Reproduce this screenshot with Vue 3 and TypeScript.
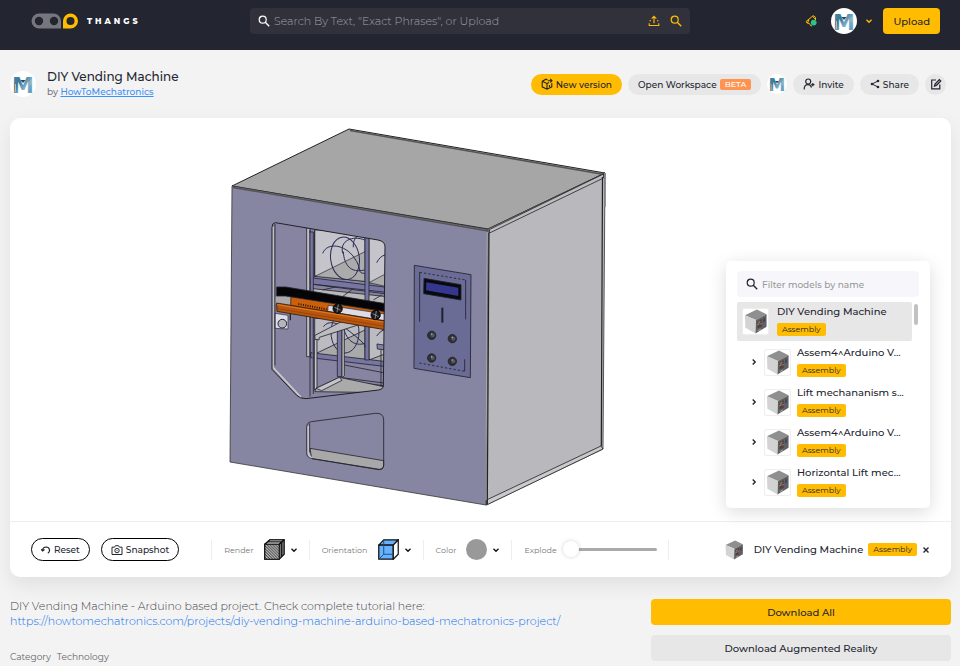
<script setup lang="ts">
import { ref } from 'vue'

interface ModelNode {
  name: string
  kind: string
}

const root: ModelNode = { name: 'DIY Vending Machine', kind: 'Assembly' }
const children: ModelNode[] = [
  { name: 'Assem4^Arduino V...', kind: 'Assembly' },
  { name: 'Lift mechananism s...', kind: 'Assembly' },
  { name: 'Assem4^Arduino V...', kind: 'Assembly' },
  { name: 'Horizontal Lift mec...', kind: 'Assembly' },
]

const buttons = [
  { x: 95, y: 646 },
  { x: 157, y: 656 },
  { x: 95, y: 714 },
  { x: 157, y: 724 },
]

const query = ref('')
const filter = ref('')
const explode = ref(0)
</script>

<template>
  <svg class="sprite" aria-hidden="true">
    <defs>
      <linearGradient id="mBlue" x1="0" y1="0" x2="1" y2="1">
        <stop offset="0" stop-color="#4a93b5" />
        <stop offset="0.35" stop-color="#3b7796" />
        <stop offset="0.6" stop-color="#7fb2cf" />
        <stop offset="1" stop-color="#4889b4" />
      </linearGradient>
      <pattern id="hatch" width="3" height="3" patternUnits="userSpaceOnUse">
        <rect width="3" height="3" fill="#fff" />
        <path d="M-1 -1l5 5M-1 2l2 2M2 -1l2 2" stroke="#111" stroke-width="1.1" />
      </pattern>
      <symbol id="avatar" viewBox="0 0 26 26">
        <circle cx="13" cy="13" r="13" fill="#fff" />
        <text x="13" y="21.500" text-anchor="middle" class="avatar-letter">M</text>
        <path d="M5.500 13v8M21 9v5" stroke="#c9b98e" stroke-width="1" />
        <path d="M10.500 9l2.500 3 2.500-3z" fill="#27475d" />
      </symbol>
      <symbol id="thumb" viewBox="0 0 26 26">
        <path d="M2 6.500L14.500 0.500 24.500 5.500 13.500 11.500z" fill="#8f8f8f" />
        <path d="M2 6.500L13.500 11.500 13 25.500 2.500 19.500z" fill="#d3d3d3" />
        <path d="M13.500 11.500L24.500 5.500V18.500L13 25.500z" fill="#616163" />
        <path d="M15 13l4.500-2.500v8L15 20z" fill="#4a4243" />
        <path d="M15 15.500l2-1v1.700l-2 1zM18 15l1.500-.8v1.500l-1.500.8z" fill="#c17b4b" />
        <path d="M16 13.500l2-1v1l-2 1zM15.500 22l3-1.800v1.200l-3 1.800z" fill="#aaa" />
        <path d="M21 10l2-1v4l-2 1z" fill="#3e4468" />
      </symbol>
      <symbol id="search" viewBox="0 0 12 12">
        <circle cx="4.700" cy="4.700" r="3.500" fill="none" stroke="currentColor" stroke-width="1.200" />
        <path d="M7.300 7.300L11.200 11.200" stroke="currentColor" stroke-width="1.400" />
      </symbol>
      <symbol id="chevron" viewBox="0 0 8 8">
        <path d="M1.500 2.700L4 5.200 6.500 2.700" fill="none" stroke="currentColor" stroke-width="1.400" />
      </symbol>
    </defs>
  </svg>

  <header class="topbar">
    <a class="brand" href="#" aria-label="Thangs home">
      <svg class="brand-mark" viewBox="0 0 48 16">
        <path d="M8 .5H22.500a7.500 7.500 0 0 1 7.500 7.500V15.500H8A7.500 7.500 0 0 1 8 .5z" fill="#76767e" />
        <circle cx="8" cy="8" r="4.200" fill="#232530" />
        <circle cx="23" cy="8" r="4.200" fill="#232530" />
        <path d="M32 15.500V8A7.500 7.500 0 1 1 39.500 15.500z" fill="#ffbc00" />
        <circle cx="39.500" cy="8" r="4" fill="#232530" />
      </svg>
      <span class="brand-name">THANGS</span>
    </a>
    <form class="search" @submit.prevent>
      <svg class="i12"><use href="#search" /></svg>
      <input v-model="query" type="text" aria-label="Search" placeholder="Search By Text, &quot;Exact Phrases&quot;, or Upload" />
      <button type="button" class="plain gold" aria-label="Upload file to search">
        <svg class="i12" viewBox="0 0 12 12" fill="none" stroke="currentColor" stroke-width="1.100">
          <path d="M6 8.200V1.500M3.700 3.600L6 1.300 8.300 3.600M3 5.800H1.500M9 5.800h1.500M1.200 8.200v2.300h9.600V8.200" />
        </svg>
      </button>
      <button type="submit" class="plain gold" aria-label="Search"><svg class="i12"><use href="#search" /></svg></button>
    </form>
    <div class="account">
      <button type="button" class="plain gold" aria-label="Notifications">
        <svg class="i12" viewBox="0 0 12 12">
          <path d="M7.500 1.200L1.200 6.300 2 8 4.500 8.500 5.500 10.500 7 11M7.500 1.200L10.500 4.500M7.500 1.200L9 .8 10.500 2.500V5M4 4.500L2.500 8" fill="none" stroke="currentColor" stroke-width="1" />
          <circle cx="8.700" cy="7.600" r="2.900" fill="#2bc48a" />
        </svg>
      </button>
      <button type="button" class="plain gold user" aria-label="Account menu">
        <svg class="i26"><use href="#avatar" /></svg>
        <svg class="i8"><use href="#chevron" /></svg>
      </button>
      <button type="button" class="upload">Upload</button>
    </div>
  </header>

  <main class="page">
    <section class="heading">
      <svg class="i26"><use href="#avatar" /></svg>
      <div class="titles">
        <h1>DIY Vending Machine</h1>
        <p>by <a href="#">HowToMechatronics</a></p>
      </div>
      <div class="actions">
        <button type="button" class="pill primary">
          <svg class="i12" viewBox="0 0 12 12" fill="none" stroke="currentColor" stroke-width="1.100">
            <path d="M1.200 3.200L5 1.200 6.500 2M1.200 3.200V8.800L6 11.200 10.800 8.800V5M1.200 3.200L6 5.500V11M6 5.500L8 4.500M7 2.700H11M9.300 1L11 2.700 9.300 4.400M8.500 7v2" />
          </svg>
          New version
        </button>
        <button type="button" class="pill">Open Workspace <span class="beta">BETA</span></button>
        <svg class="i20"><use href="#avatar" /></svg>
        <button type="button" class="pill">
          <svg class="i12" viewBox="0 0 12 12" fill="none" stroke="currentColor" stroke-width="1.200">
            <circle cx="5.200" cy="3.500" r="2.500" />
            <path d="M1.200 11.500C1.200 8 2.600 6.600 5 6.600c1.800 0 3 .9 3.500 2.900M9.800 5v3.200M8.200 6.600h3.200" />
          </svg>
          Invite
        </button>
        <button type="button" class="pill">
          <svg class="i10" viewBox="0 0 10 10">
            <path d="M8 2L2 5l6 3" fill="none" stroke="currentColor" />
            <circle cx="8" cy="2" r="1.300" fill="currentColor" /><circle cx="2" cy="5" r="1.300" fill="currentColor" /><circle cx="8" cy="8" r="1.300" fill="currentColor" />
          </svg>
          Share
        </button>
        <button type="button" class="pill round" aria-label="Edit">
          <svg class="i12" viewBox="0 0 12 12" fill="none" stroke="currentColor" stroke-width="1.200">
            <path d="M6 2H1.700V10.800H9.800V6.500" />
            <path d="M4.500 8L5 6 9.300 1.500 10.800 3 6.400 7.400z" fill="currentColor" fill-opacity=".25" />
          </svg>
        </button>
      </div>
    </section>

    <section class="viewer">
      <div class="stage">
        <svg class="model" viewBox="10 118 941 403" role="img" aria-label="Vending machine 3D model" stroke-linejoin="round">
          <path d="M232 186L349 129 605 173 488 229z" fill="#a6a6a6" stroke="#222" />
          <path d="M488 229L605 173 603 449 486 505z" fill="#b9b8bd" stroke="#333" stroke-width=".8" />
          <path d="M232 186L488 229.500 486 505 230 462z" fill="#8786a2" stroke="#333" stroke-width=".8" />
          <path d="M233 187.500L488 231M350 130.500L604 174.500" fill="none" stroke="#555" stroke-width="1.500" />
          <path d="M489.500 229.500L603.500 174V178L489.500 233z" fill="#bdbcc1" stroke="#222" stroke-width=".8" />
          <path d="M487.500 499.500L601 446 603 449 486.500 505z" fill="#cac9cd" stroke="#333" stroke-width=".9" />
          <path d="M602.500 177L601.300 446M489 233L487.300 504" fill="none" stroke="#222" stroke-width="1.200" />
          <path d="M605 173V207" stroke="#85858a" stroke-width="1.600" />
          <path d="M487.300 232L486 500" stroke="#bebdc6" stroke-width=".8" />

          <!-- Dispenser window -->
          <clipPath id="windowClip">
            <path d="M46 38L354 90Q375 94 375 110L370 530Q368 538 356 540L138 566Q120 566 110 556L36 478V52Q36 39 46 38z" />
          </clipPath>
          <g transform="translate(260 210) scale(.33333)">
            <g clip-path="url(#windowClip)" stroke="#252530" stroke-width="2.500" fill="none">
              <path d="M30 30H380V570H30z" fill="#8684a0" />
              <path d="M164 60H315V214L164 198zM327 85H380V225L327 218z" fill="#c5c4ca" />
              <path d="M165 199L315 125V214zM327 218L380 190V230z" fill="#ababab" stroke-width="2" />
              <path d="M150 235L380 260V300L150 280z" fill="#b9b9ba" />
              <path d="M188 240L230 230M240 265L275 240M340 270L365 255" />
              <path d="M164 325H315V450L164 432zM327 350H380V460L327 450z" fill="#bcbbc2" />
              <path d="M165 432L315 360V450zM327 450L380 430V460z" fill="#a9a9a9" />
              <path d="M152 203L380 232V252L152 222z" fill="#7776a3" />
              <path d="M152 222L380 247" />
              <path d="M152 428L380 455V470L152 443z" fill="#7776a3" />
              <path d="M315 76H327V450H315z" fill="#7776a3" />
              <g stroke="#2b2c55" stroke-width="3">
                <ellipse cx="255" cy="145" rx="43" ry="64" transform="rotate(-8 255 145)" />
                <path d="M188 130C202 95 255 104 282 142S290 190 314 190M248 130C238 92 278 75 314 90M250 125C252 166 273 190 313 180M280 112C278 90 290 76 302 74M350 158Q361 137 376 135" />
                <ellipse cx="255" cy="367" rx="42" ry="62" />
                <path d="M190 350Q213 320 270 365T313 412M249 342C255 392 285 410 315 400M350 378Q360 363 374 358" />
              </g>
              <path d="M140 54H150V440H140z" fill="#c0bfc5" />
              <path d="M150 60V560M164 62V202M148 66H160V552" fill="#7776a3" />
              <!-- Lower tray frame -->
              <path d="M232 350H246V500H232z" fill="#7978a3" />
              <path d="M246 350L253 344V497L246 503z" fill="#bbb" />
              <path d="M163 390L171 385V535L163 540z" fill="#c4c3c8" />
              <path d="M165 376L250 332 310 340 178 382 177 390 164 387z" fill="#bdbcc1" />
              <path d="M253 465L380 490M246 503L380 520M246 512L380 528" />
              <path d="M168 535L238 502 372 530V548L165 545z" fill="#aaa" />
              <path d="M168 535L238 502 246 511 185 542z" fill="#c5c4c8" />
              <path d="M351 402L378 406V420L352 417zM363 420V530" fill="#8382a4" />
              <!-- Carriage and rails -->
              <path d="M45 260L100 250V285L45 283z" fill="#aaa9ad" stroke="none" />
              <path d="M93 258L375 300V337L92 287z" fill="#cb5f0a" stroke="#492714" />
              <path d="M50 231H78L376 281V305L76 258H50z" fill="#050507" />
              <path d="M205 286L375 312V332L202 304z" fill="#dddce9" stroke-width="2" />
              <path d="M50 279L374 333V359L51 304z" fill="#b9560b" stroke="#30190e" />
              <path d="M52 284L374 337" stroke="#df7d28" stroke-width="3" />
              <path d="M52 296L374 349" stroke="#83400e" stroke-width="2" />
              <path d="M115 282L205 299" stroke="#2a1508" stroke-width="6" stroke-dasharray="3 4" />
              <g fill="#18191c" stroke="#000">
                <circle cx="233" cy="296" r="14" /><circle cx="347" cy="315" r="14" />
              </g>
              <path d="M224 292l18 9M235 283l-4 24M338 311l18 9M349 303l-4 24" stroke="#b6b6bb" stroke-width="2" />
              <path d="M45 310L84 316V357L45 355z" fill="#dddce9" stroke-width="2" />
              <circle cx="67" cy="341" r="13" fill="#b6b5bd" stroke-width="3" />
              <path d="M91 311v20" stroke-width="4" />
              <path d="M39 50V472L123 562" stroke="#c9c9c9" stroke-width="5" />
              <path d="M45 42V466" />
            </g>
            <path d="M46 38L354 90Q375 94 375 110L370 530Q368 538 356 540L138 566Q120 566 110 556L36 478V52Q36 39 46 38z" fill="none" stroke="#20202a" stroke-width="3" />
          </g>

          <!-- Control panel -->
          <g transform="translate(400 120) scale(.33333)" fill="none" stroke="#20212d" stroke-width="2.500">
            <path d="M43 436L213 464 211 773 42 745z" fill="#6b6c96" />
            <path d="M59 457L197 480M58 729L194 754" stroke-dasharray="7 6" />
            <path d="M59 457V605M197 480V598M194 718V754" />
            <path d="M72 475L183 494V540L71 521z" fill="#090a0e" />
            <path d="M79 487L175 503V528L78 511z" fill="#35378f" stroke="none" />
            <path d="M127 563V608" stroke-width="6" />
            <g v-for="b in buttons" :key="`${b.x}-${b.y}`">
              <circle :cx="b.x" :cy="b.y" r="12.500" fill="#303136" />
              <circle :cx="b.x + 3" :cy="b.y" r="6" fill="#57585b" stroke="none" />
              <circle :cx="b.x" :cy="b.y - 4" r="2.500" fill="#aaa" stroke="none" />
            </g>
          </g>

          <!-- Collection slot -->
          <g transform="translate(220 380) scale(.33333)" fill="none" stroke="#24242f" stroke-width="2.500">
            <path d="M270 205L491 242V258Q490 268 478 268L275 236z" fill="#a8a8a9" />
            <path d="M265 137V220Q266 230 276 235" stroke="#c5c5c9" stroke-width="7" />
            <path d="M274 125L466 100Q491 98 491 120V254Q491 270 476 269L277 236Q260 234 260 218V142Q260 127 274 125zM269 130V217" />
          </g>
        </svg>

        <aside class="tree">
          <label class="filter">
            <svg class="i12"><use href="#search" /></svg>
            <input v-model="filter" type="text" aria-label="Filter models by name" placeholder="Filter models by name" />
          </label>
          <div class="tree-body">
            <ul>
              <li class="node selected">
                <span class="thumb"><svg><use href="#thumb" /></svg></span>
                <span class="node-text"><span class="node-name">{{ root.name }}</span><span class="badge">{{ root.kind }}</span></span>
              </li>
              <li v-for="(node, i) in children" :key="i" class="node child">
                <button type="button" class="plain" :aria-label="`Expand ${node.name}`">
                  <svg class="i8 turn"><use href="#chevron" /></svg>
                </button>
                <span class="thumb"><svg><use href="#thumb" /></svg></span>
                <span class="node-text"><span class="node-name">{{ node.name }}</span><span class="badge">{{ node.kind }}</span></span>
              </li>
            </ul>
            <span class="scroll"></span>
          </div>
        </aside>
      </div>

      <div class="toolbar">
        <div class="views">
          <button type="button" class="outline">
            <svg class="i10" viewBox="0 0 10 10" fill="none" stroke="currentColor" stroke-width="1.200">
              <path d="M1.500 5.500C1.700 3.300 3.300 2 5.300 2a3.300 3.300 0 0 1 1.500 6.200M0 4.200l1.600 1.800L3.500 4.500" />
            </svg>
            Reset
          </button>
          <button type="button" class="outline">
            <svg class="i12" viewBox="0 0 12 12" fill="none" stroke="currentColor">
              <path d="M1 3.200h2.500L4.500 1.700h3L8.500 3.200H11V10.500H1z" /><circle cx="6" cy="6.600" r="2.200" /><path d="M5.500 6.600h1" />
            </svg>
            Snapshot
          </button>
        </div>
        <div class="tool">
          <span>Render</span>
          <button type="button" class="plain drop" aria-label="Render mode">
            <svg class="i21" viewBox="0 0 22 22" stroke="#111" stroke-width="1.200">
              <path d="M.8 5.500L6 .8H21.200V16L16 21.200H.8z" fill="#777" />
              <path d="M1 5.500L6 1H21L16 5.500z" fill="#eee" />
              <path d="M4 3H18.500V18.500M16 5.500L21 1" fill="none" />
              <path d="M.8 5.500H16V21.200H.8z" fill="url(#hatch)" />
            </svg>
            <svg class="i8"><use href="#chevron" /></svg>
          </button>
        </div>
        <div class="tool">
          <span>Orientation</span>
          <button type="button" class="plain drop" aria-label="Orientation">
            <svg class="i21" viewBox="0 0 22 22" fill="none" stroke="#111" stroke-width="1.300">
              <path d="M.8 6.500L6 .8H21.200L16 6.500z" fill="#66b2ff" />
              <path d="M.8 6.500H16V21.200H.8z" fill="#66b2ff" />
              <path d="M16 6.500L21.200 .8V16L16 21.200z" fill="#fff" />
              <path d="M6 1V16H15.500M6 16L1 21" stroke="#244a77" stroke-width="1" />
            </svg>
            <svg class="i8"><use href="#chevron" /></svg>
          </button>
        </div>
        <div class="tool">
          <span>Color</span>
          <button type="button" class="plain drop" aria-label="Color">
            <i class="swatch"></i>
            <svg class="i8"><use href="#chevron" /></svg>
          </button>
        </div>
        <div class="tool explode">
          <label for="explode">Explode</label>
          <input id="explode" v-model="explode" type="range" min="0" max="100" />
        </div>
        <div class="current">
          <svg class="i20"><use href="#thumb" /></svg>
          <span class="current-name">{{ root.name }}</span>
          <span class="badge">{{ root.kind }}</span>
          <button type="button" class="plain" aria-label="Clear selection">
            <svg class="i8" viewBox="0 0 8 8"><path d="M1.500 1.500l5 5M6.500 1.500l-5 5" stroke="currentColor" stroke-width="1.400" /></svg>
          </button>
        </div>
      </div>
    </section>

    <section class="details">
      <div class="about">
        <p>DIY Vending Machine - Arduino based project. Check complete tutorial here:</p>
        <a href="https://howtomechatronics.com/projects/diy-vending-machine-arduino-based-mechatronics-project/">https://howtomechatronics.com/projects/diy-vending-machine-arduino-based-mechatronics-project/</a>
        <p class="category"><span>Category</span><span>Technology</span></p>
      </div>
      <div class="downloads">
        <button type="button" class="download gold-fill">Download All</button>
        <button type="button" class="download">Download Augmented Reality</button>
      </div>
    </section>
  </main>
</template>

<style>
body {
  background: #f3f3f3;
}
#app {
  font-family: Montserrat, Inter, sans-serif;
  color: #232530;
}
</style>

<style scoped>
* {
  box-sizing: border-box;
}
button,
input {
  font: inherit;
  color: inherit;
}
button {
  cursor: pointer;
  white-space: nowrap;
}
h1,
p,
ul {
  margin: 0;
  padding: 0;
}
svg {
  display: block;
  flex: none;
}
.sprite {
  position: absolute;
  width: 0;
  height: 0;
}
.avatar-letter {
  font: 700 22px "DejaVu Sans", sans-serif;
  fill: url(#mBlue);
}
.i8 {
  width: 8px;
  height: 8px;
}
.i10 {
  width: 10px;
  height: 10px;
}
.i12 {
  width: 12px;
  height: 12px;
}
.i20 {
  width: 20px;
  height: 20px;
}
.i21 {
  width: 21px;
  height: 21px;
}
.i26 {
  width: 26px;
  height: 26px;
}
.plain {
  display: flex;
  align-items: center;
  padding: 0;
  border: 0;
  background: none;
}
.plain.gold {
  color: #ffbc00;
}

.topbar {
  display: grid;
  grid-template-columns: 219px 1fr 250px;
  align-items: center;
  height: 50px;
  padding: 0 20px 8px 31px;
  background: #232530;
}
.brand {
  display: flex;
  align-items: center;
  gap: 8px;
  color: #fff;
  text-decoration: none;
}
.brand-mark {
  width: 48px;
  height: 16px;
}
.brand-name {
  font-size: 8px;
  font-weight: 800;
  letter-spacing: 3px;
}
.search {
  display: flex;
  align-items: center;
  gap: 10px;
  height: 26px;
  padding: 0 8px;
  border-radius: 4px;
  background: #31313c;
  color: #fff;
}
.search input {
  flex: 1;
  min-width: 0;
  padding: 0;
  border: 0;
  outline: 0;
  background: none;
  font-size: 11px;
  font-weight: 300;
  margin-left: -6px;
}
.search input::placeholder {
  color: #a0a0a4;
}
.account {
  display: flex;
  align-items: center;
  justify-content: flex-end;
  gap: 10px;
}
.user {
  gap: 8px;
  margin-left: 4px;
}
.upload {
  height: 26px;
  padding: 0 10px;
  border: 0;
  border-radius: 4px;
  background: #ffbc00;
  font-size: 10px;
  font-weight: 500;
}

.page {
  padding: 0 9px 5px 10px;
}
.heading {
  display: flex;
  align-items: center;
  height: 68px;
  padding-right: 5px;
}
.titles {
  margin-left: 11px;
  padding-bottom: 1px;
}
h1 {
  font-size: 12px;
  line-height: 16px;
  font-weight: 500;
}
.titles p {
  font-size: 9px;
  line-height: 13px;
  font-weight: 500;
  color: #77777e;
}
.titles a {
  color: #3d90f5;
}
.actions {
  display: flex;
  align-items: center;
  gap: 6px;
  margin-left: auto;
}
.pill {
  display: flex;
  align-items: center;
  gap: 3px;
  height: 21px;
  padding: 0 10px;
  border: 0;
  border-radius: 11px;
  background: #e7e7e7;
  font-size: 9px;
  font-weight: 500;
}
.pill.primary {
  background: #ffbc00;
}
.pill.round {
  width: 21px;
  padding: 0;
  justify-content: center;
}
.beta {
  padding: 0 5px;
  border-radius: 2px;
  background: #ff9351;
  color: #fff;
  font-size: 8px;
  line-height: 11px;
}

.viewer {
  border-radius: 10px;
  background: #fff;
  box-shadow: 0 8px 20px rgba(0, 0, 0, 0.08);
}
.stage {
  position: relative;
  border-bottom: 1px solid #eee;
}
.model {
  width: 100%;
  height: auto;
}
.tree {
  position: absolute;
  right: 21px;
  bottom: 13px;
  width: 204px;
  padding: 10px 11px 7px;
  border-radius: 5px;
  background: #fff;
  box-shadow: 0 4px 18px rgba(0, 0, 0, 0.14);
}
.filter {
  display: flex;
  align-items: center;
  gap: 4px;
  height: 26px;
  padding: 0 9px;
  border-radius: 4px;
  background: #f7f7fb;
}
.filter input {
  flex: 1;
  min-width: 0;
  padding: 0;
  border: 0;
  outline: 0;
  background: none;
  font-size: 9px;
  font-weight: 500;
}
.filter input::placeholder {
  color: #999;
}
.tree-body {
  display: flex;
  gap: 2px;
  margin-top: 5px;
  padding-right: 1px;
}
.tree ul {
  flex: 1;
  min-width: 0;
  display: grid;
  gap: 2px;
  list-style: none;
}
.scroll {
  width: 4px;
  height: 21px;
  margin-top: 2px;
  border-radius: 2px;
  background: #c1c1c1;
}
.node {
  display: flex;
  align-items: center;
  gap: 8px;
  height: 38px;
  padding-left: 5px;
  border-radius: 2px;
}
.node.selected {
  height: 39px;
  background: #e7e7e7;
}
.node.child {
  gap: 6px;
  padding-left: 13px;
}
.turn {
  transform: rotate(-90deg);
}
.thumb {
  flex: none;
  display: grid;
  place-items: center;
  width: 27px;
  height: 27px;
  border: 1px solid #eee;
  border-radius: 2px;
  background: #fff;
}
.thumb svg {
  width: 25px;
  height: 25px;
}
.node-text {
  display: grid;
  justify-items: start;
  gap: 4px;
  padding-bottom: 2px;
}
.node-name {
  font-size: 10px;
  line-height: 14px;
  font-weight: 500;
  white-space: nowrap;
}
.badge {
  padding: 0 5px;
  border-radius: 2px;
  background: #ffbc00;
  font-size: 8px;
  line-height: 13px;
}

.toolbar {
  display: flex;
  align-items: center;
  height: 55px;
  padding: 0 21px;
}
.views {
  display: flex;
  gap: 11px;
  margin-right: 32px;
}
.outline {
  display: flex;
  align-items: center;
  gap: 3px;
  height: 23px;
  padding: 0 9px;
  border: 1px solid #000;
  border-radius: 12px;
  background: #fff;
  font-size: 9px;
  font-weight: 500;
}
.tool {
  display: flex;
  align-items: center;
  gap: 10px;
  height: 20px;
  padding: 0 11px 0 12px;
  border-left: 1px solid #eee;
  font-size: 8px;
  color: #77777b;
}
.drop {
  gap: 5px;
  color: #111;
}
.swatch {
  width: 21px;
  height: 21px;
  border-radius: 50%;
  background: #999;
}
.explode {
  gap: 6px;
  border-right: 1px solid #eee;
}
.explode input {
  width: 94px;
  height: 16px;
  margin: 0;
  appearance: none;
  background: none;
}
.explode input::-webkit-slider-runnable-track {
  height: 3px;
  border-radius: 2px;
  background: linear-gradient(to right, transparent 14px, #aaa 14px);
}
.explode input::-webkit-slider-thumb {
  appearance: none;
  width: 16px;
  height: 16px;
  margin-top: -7px;
  border-radius: 50%;
  background: #fff;
  box-shadow: 0 0 4px rgba(0, 0, 0, 0.18);
}
.current {
  display: flex;
  align-items: center;
  gap: 5px;
  margin-left: auto;
}
.current-name {
  margin-left: 5px;
  font-size: 10px;
  font-weight: 500;
}

.details {
  display: grid;
  grid-template-columns: 1fr 300px;
  align-items: start;
  gap: 30px;
  padding-top: 22px;
}
.about {
  font-size: 11px;
  line-height: 15px;
  font-weight: 300;
  color: #44444a;
  white-space: nowrap;
}
.about a {
  color: #0a70ee;
  text-decoration: none;
}
.category {
  display: flex;
  gap: 6px;
  margin-top: 20px;
  font-size: 9px;
  font-weight: 400;
  color: #66666c;
}
.downloads {
  display: grid;
  gap: 10px;
}
.download {
  height: 26px;
  border: 0;
  border-radius: 4px;
  background: #e7e7e7;
  font-size: 10px;
  font-weight: 500;
}
.download.gold-fill {
  background: #ffbc00;
}
</style>
